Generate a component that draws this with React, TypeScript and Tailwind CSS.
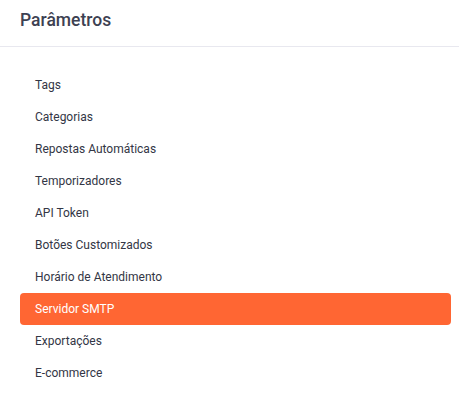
const items = [
  "Tags",
  "Categorias",
  "Repostas Automáticas",
  "Temporizadores",
  "API Token",
  "Botões Customizados",
  "Horário de Atendimento",
  "Servidor SMTP",
  "Exportações",
  "E-commerce",
];

export default function App() {
  const active = "Servidor SMTP";

  return (
    <div className="h-[418px] w-[459px] bg-white font-['Roboto',sans-serif]">
      <header className="flex h-[47px] items-start border-b border-[#e8e8ef] px-5 pt-[7px]">
        <h1 className="text-[17.5px] font-medium text-[#3d4152]">Parâmetros</h1>
      </header>

      <nav className="flex flex-col pl-5 pr-2 pt-[22px]">
        {items.map((item) => (
          <a
            key={item}
            href="#"
            className={
              item === active
                ? "flex h-8 items-center rounded bg-[#ff6633] px-[15px] text-[12px] text-white"
                : "flex h-8 items-center px-[15px] text-[12px] text-[#333645]"
            }
          >
            {item}
          </a>
        ))}
      </nav>
    </div>
  );
}
